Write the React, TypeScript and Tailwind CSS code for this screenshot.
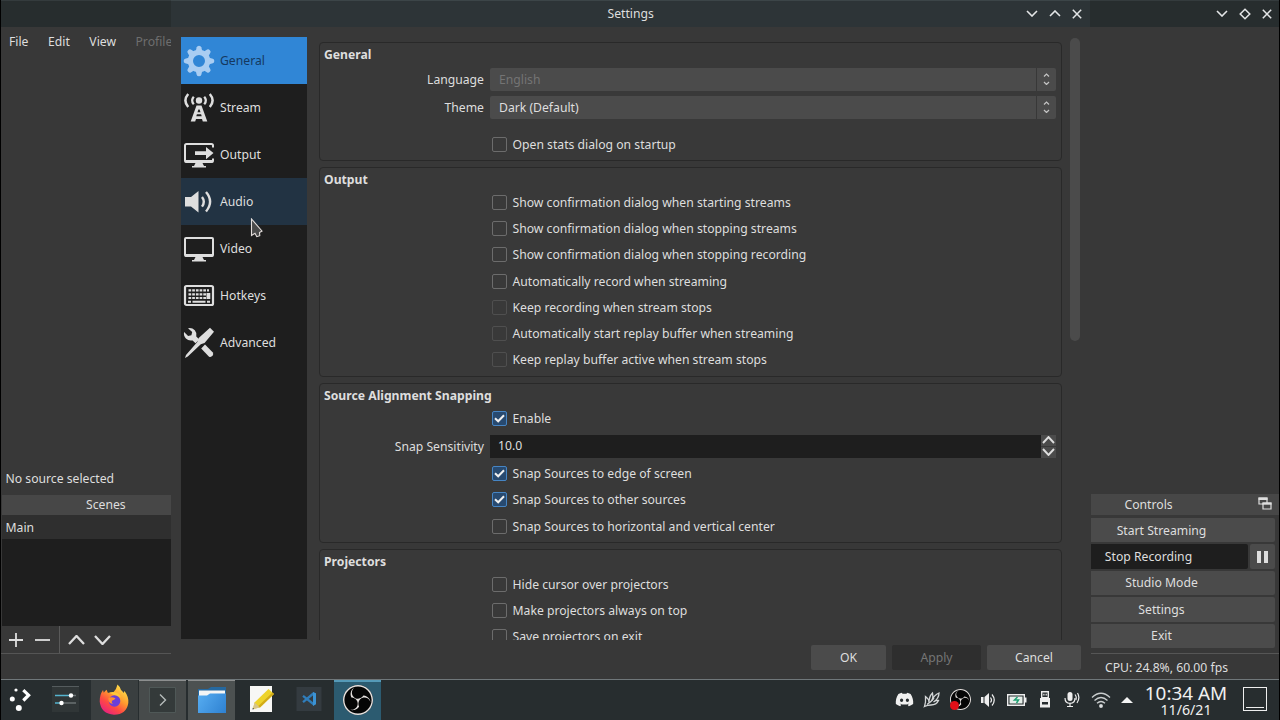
import { ReactNode } from "react";
import clsx from "clsx";
import { FaDiscord } from "react-icons/fa";
import { SiObsstudio } from "react-icons/si";

const GearIcon = () => (
  <svg width="32" height="32" viewBox="0 0 32 32" fill="none">
    <circle cx="16" cy="16" r="8.6" stroke="#a9cdf2" strokeWidth="5.2" />
    {[0, 45, 90, 135, 180, 225, 270, 315].map((angle) => (
      <path
        key={angle}
        d="M12.6 6.500 13.700 2.200q.4-1.500 2.300-1.500t2.300 1.500l1.100 4.300z"
        fill="#a9cdf2"
        transform={`rotate(${angle} 16 16)`}
      />
    ))}
  </svg>
);

const StreamIcon = () => (
  <svg width="32" height="32" viewBox="0 0 32 32" fill="none" stroke="#dedede">
    <circle cx="16" cy="8.500" r="3.200" fill="#dedede" stroke="none" />
    <path d="M10.800 4.800q-3.400 3.700 0 7.400M21.200 4.800q3.400 3.700 0 7.400" strokeWidth="2.300" />
    <path d="M5.200 2q-5.600 6.500 0 13M26.800 2q5.600 6.500 0 13" strokeWidth="2.500" />
    <path
      d="M13.500 13.500h5L24.300 29.500h-4.500L19 27h-6l-.8 2.500H7.700zM15.400 17.500l-.9 2.700h3l-.9-2.700zM13.900 22.300l-.6 2h5.400l-.6-2z"
      fill="#dedede"
      fillRule="evenodd"
      stroke="none"
    />
  </svg>
);

const OutputIcon = () => (
  <svg width="32" height="32" viewBox="0 0 32 32" fill="none">
    <path
      d="M30 8.500V6.500Q30 5 28.500 5H3.500Q2 5 2 6.500v15Q2 23 3.500 23h25q1.500 0 1.500-1.500V19.500"
      stroke="#dedede"
      strokeWidth="2"
    />
    <path d="M2 21h28v2.500H2zM12.500 24h7l1.500 3h2v1.500H9V27h2z" fill="#dedede" />
    <path d="M12 12.200h11V8l7.500 6.100L23 20.200V16H12z" fill="#dedede" />
  </svg>
);

const AudioIcon = () => (
  <svg width="32" height="32" viewBox="0 0 32 32" fill="none">
    <path d="M2 11h6l7.500-6v21.500L8 20.500H2z" fill="#dedede" />
    <path
      d="M19 11q3.600 4.700 0 9.600M23 6q8.200 9.500 0 19.500"
      stroke="#dedede"
      strokeWidth="2.400"
    />
  </svg>
);

const VideoIcon = () => (
  <svg width="32" height="32" viewBox="0 0 32 32" fill="none">
    <rect x="2" y="5" width="28" height="18" rx="1" stroke="#dedede" strokeWidth="2" />
    <path d="M2 21h28v2.500H2zM12.500 24h7l1.500 3h2v1.500H9V27h2z" fill="#dedede" />
  </svg>
);

const HotkeysIcon = () => (
  <svg width="32" height="32" viewBox="0 0 32 32" fill="none">
    <rect x="2" y="6" width="28" height="19" rx="1.500" stroke="#dedede" strokeWidth="2.200" />
    <path
      d="M5.500 10.300h20.500M5.500 14.300h20.500M5.500 18h20.500"
      stroke="#dedede"
      strokeWidth="2.200"
      strokeDasharray="2.700 1"
    />
    <path d="M5 21.700h3M9.500 21.700h13M24 21.700h3" stroke="#dedede" strokeWidth="1.900" />
    <path d="M23.500 13h3.800v6h-3.800z" fill="#dedede" />
  </svg>
);

const AdvancedIcon = () => (
  <svg width="32" height="32" viewBox="0 0 32 32" fill="#dedede">
    <path d="M5 1.300q4-.8 6.800 2 2.400 2.700 1.500 6.200l3 3-3.800 3.800-2.900-2.900q-4 .9-6.700-1.900Q.300 8.700 1.100 5l4 4 3.300-.8.800-3.200z" />
    <path d="M18.200 21.400 22 17.600l7.600 7.700q1.300 1.500 0 3.500-2 1.900-3.800.6z" />
    <path d="M27 .800 31 4.700 21.500 16l-3.700 1.300L4.800 29.500 2 31l1-3L14.300 15l1.400-4z" />
  </svg>
);

const categories = [
  { label: "General", icon: <GearIcon />, className: "bg-[#3086d6] text-[#15395f]" },
  { label: "Stream", icon: <StreamIcon />, className: "" },
  { label: "Output", icon: <OutputIcon />, className: "" },
  { label: "Audio", icon: <AudioIcon />, className: "bg-[#223343]" },
  { label: "Video", icon: <VideoIcon />, className: "" },
  { label: "Hotkeys", icon: <HotkeysIcon />, className: "" },
  { label: "Advanced", icon: <AdvancedIcon />, className: "" },
];

type ChevronProps = {
  up?: boolean;
  width?: number;
  height?: number;
  stroke?: number;
};

const Chevron = ({ up, width = 12, height = 7, stroke = 1.6 }: ChevronProps) => (
  <svg
    width={width}
    height={height}
    viewBox={`0 0 ${width} ${height}`}
    fill="none"
    stroke="currentColor"
    strokeWidth={stroke}
  >
    <path
      d={
        up
          ? `M1 ${height - 1}L${width / 2} 1L${width - 1} ${height - 1}`
          : `M1 1L${width / 2} ${height - 1}L${width - 1} 1`
      }
    />
  </svg>
);

const CloseIcon = () => (
  <svg width="10" height="10" viewBox="0 0 10 10" stroke="currentColor" strokeWidth="1.500">
    <path d="M.8.8l8.400 8.400M9.200.8.800 9.200" />
  </svg>
);

const Group = ({
  title,
  className,
  children,
}: {
  title: string;
  className: string;
  children: ReactNode;
}) => (
  <fieldset
    className={clsx(
      "w-full shrink-0 rounded-[4px] border border-[#292929] bg-[#393939]",
      className
    )}
  >
    <div className="flex h-[21.500px] items-center pl-1 pt-[1.500px] font-bold">{title}</div>
    {children}
  </fieldset>
);

const Check = ({
  label,
  checked,
  disabled,
}: {
  label: string;
  checked?: boolean;
  disabled?: boolean;
}) => (
  <div className="flex h-[26.200px] items-center pl-[172px]">
    <span
      className={clsx(
        "flex size-[15px] items-center justify-center rounded-[2px] border",
        checked && "border-[#4685c4] bg-[#284a70]",
        !checked && !disabled && "border-[#6c6c6c]",
        disabled && "border-[#4f4f4f]"
      )}
    >
      {checked && (
        <svg width="11" height="9" viewBox="0 0 11 9" fill="none">
          <path d="M1 4.200 4.200 7.300 10 1.200" stroke="#f0f0f0" strokeWidth="2" />
        </svg>
      )}
    </span>
    <span className="ml-[5.500px] pt-px">{label}</span>
  </div>
);

const Combo = ({
  label,
  value,
  disabled,
}: {
  label: string;
  value: string;
  disabled?: boolean;
}) => (
  <div className="flex h-7 items-center">
    <span className="w-[164px] pt-px text-right">{label}</span>
    <div className="ml-[6px] flex h-[23px] w-[566px] rounded-[2px] bg-[#4b4b4b]">
      <span
        className={clsx(
          "flex flex-1 items-center border-r border-[#383838] pl-[9px] pt-px",
          disabled && "text-[#747474]"
        )}
      >
        {value}
      </span>
      <span className="flex w-[19px] flex-col items-center justify-center gap-[3px] text-[#c4c4c4]">
        <Chevron up width={7} height={4.500} stroke={1.200} />
        <Chevron width={7} height={4.500} stroke={1.200} />
      </span>
    </div>
  </div>
);

const SettingsDialog = () => (
  <div className="flex w-[919px] flex-col bg-[#383838]">
    <div className="flex h-[27px] items-center border-t border-[#3c4548] bg-[#2d3437] pb-px pl-[436.500px] pr-2">
      <span>Settings</span>
      <div className="ml-auto flex items-center gap-[11px] text-[#e4e6e7]">
        <Chevron />
        <Chevron up />
        <CloseIcon />
      </div>
    </div>
    <div className="flex h-[613px] overflow-hidden pl-[10px]">
      <div className="mt-[10px] h-[602px] w-[126px] bg-[#1e1e1e]">
        {categories.map(({ label, icon, className }) => (
          <div
            key={label}
            className={clsx("flex h-[46.900px] items-center pl-[2px] pt-[2px]", className)}
          >
            {icon}
            <span className="ml-[5px]">{label}</span>
          </div>
        ))}
      </div>
      <div className="ml-3 mt-[15px] flex w-[743px] flex-col gap-[6px] overflow-hidden">
        <Group title="General" className="h-[119px]">
          <div className="pt-[0.500px]">
            <Combo label="Language" value="English" disabled />
            <Combo label="Theme" value="Dark (Default)" />
          </div>
          <div className="mt-[10px]">
            <Check label="Open stats dialog on startup" />
          </div>
        </Group>
        <Group title="Output" className="h-[210px]">
          <Check label="Show confirmation dialog when starting streams" />
          <Check label="Show confirmation dialog when stopping streams" />
          <Check label="Show confirmation dialog when stopping recording" />
          <Check label="Automatically record when streaming" />
          <Check label="Keep recording when stream stops" disabled />
          <Check label="Automatically start replay buffer when streaming" disabled />
          <Check label="Keep replay buffer active when stream stops" disabled />
        </Group>
        <Group title="Source Alignment Snapping" className="h-[160px]">
          <Check label="Enable" checked />
          <div className="flex h-[29px] items-center">
            <span className="w-[164px] pt-px text-right">Snap Sensitivity</span>
            <div className="ml-[6px] flex h-[23px] w-[566px]">
              <span className="flex flex-1 items-center bg-[#1e1e1e] pl-2">10.0</span>
              <div className="flex w-[15px] flex-col gap-px text-[#dedede]">
                <span className="flex flex-1 items-center justify-center bg-[#4b4b4b]">
                  <Chevron up width={13} height={8} stroke={1.900} />
                </span>
                <span className="flex flex-1 items-center justify-center bg-[#4b4b4b]">
                  <Chevron width={13} height={8} stroke={1.900} />
                </span>
              </div>
            </div>
          </div>
          <Check label="Snap Sources to edge of screen" checked />
          <Check label="Snap Sources to other sources" checked />
          <Check label="Snap Sources to horizontal and vertical center" />
        </Group>
        <Group title="Projectors" className="h-[160px]">
          <Check label="Hide cursor over projectors" />
          <Check label="Make projectors always on top" />
          <Check label="Save projectors on exit" />
        </Group>
      </div>
      <div className="ml-2 mt-[11px] h-[303px] w-[10px] rounded-full bg-[#4b4b4b]" />
    </div>
    <div className="flex justify-end gap-[6px] pr-[9px] pt-[5px]">
      <button className="h-[25px] w-[75px] rounded-[2px] bg-[#4b4b4b]">OK</button>
      <button className="h-[25px] w-[89px] rounded-[2px] bg-[#2e2e2e] text-[#757575]">
        Apply
      </button>
      <button className="h-[25px] w-[94px] rounded-[2px] bg-[#4b4b4b]">Cancel</button>
    </div>
  </div>
);

const ScenesColumn = () => (
  <div className="flex w-[170px] flex-col">
    <div className="h-[27px] shrink-0 border-t border-[#343b3d] bg-[#272d2e]" />
    <div className="flex h-[30px] shrink-0 items-center gap-[19.500px] pl-2">
      <span>File</span>
      <span>Edit</span>
      <span>View</span>
      <span className="text-[#6e6e6e]">Profile</span>
    </div>
    <div className="mt-auto pb-[7.500px] pl-[4.500px]">No source selected</div>
    <div className="ml-px flex h-[20px] shrink-0 items-center bg-[#474747] pl-[84px]">
      Scenes
    </div>
    <div className="ml-px h-[111px] shrink-0 bg-[#1e1e1e]">
      <div className="flex h-[24px] items-center bg-[#2f2f2f] pl-[3.500px] pt-px">Main</div>
    </div>
    <div className="ml-px flex h-[27px] shrink-0 items-center text-[#dedede]">
      <svg width="14" height="14" viewBox="0 0 14 14" className="ml-[7px]">
        <path d="M7 0v14M0 7h14" stroke="currentColor" strokeWidth="1.800" />
      </svg>
      <svg width="15" height="14" viewBox="0 0 15 14" className="ml-3">
        <path d="M0 7h15" stroke="currentColor" strokeWidth="1.800" />
      </svg>
      <span className="ml-[9px] h-full w-px bg-[#5a5a5a]" />
      <span className="ml-2">
        <Chevron up width={17} height={10} stroke={2.300} />
      </span>
      <span className="ml-[9px]">
        <Chevron width={17} height={10} stroke={2.300} />
      </span>
    </div>
    <div className="h-[26px] shrink-0 border-t border-[#555555]" />
  </div>
);

const ControlButton = ({ label }: { label: string }) => (
  <button className="flex h-[24.300px] w-[184px] items-center justify-center rounded-r-[2px] bg-[#4b4b4b] pr-[43px] pt-px">
    {label}
  </button>
);

const ControlsColumn = () => (
  <div className="flex w-[189px] flex-col">
    <div className="flex h-[27px] items-center justify-end gap-[11px] border-t border-[#343b3d] bg-[#272d2e] pb-px pr-[7px] text-[#e4e6e7]">
      <Chevron />
      <svg width="12" height="12" viewBox="0 0 12 12" fill="none">
        <path d="M6 1.200 10.800 6 6 10.800 1.200 6z" stroke="currentColor" strokeWidth="1.500" />
      </svg>
      <CloseIcon />
    </div>
    <div className="ml-px mt-auto flex h-[21px] items-center bg-[#474747] pl-[33.500px] pr-[7px]">
      Controls
      <svg width="14" height="13" viewBox="0 0 14 13" fill="none" className="mb-[2px] ml-auto">
        <path d="M1 1h8v6H1z" stroke="#dedede" strokeWidth="1.200" />
        <path d="M.5.500h9V3h-9z" fill="#dedede" />
        <path d="M5 6h8v6H5z" fill="#474747" stroke="#dedede" strokeWidth="1.200" />
        <path d="M4.500 5.500h9v2.200h-9z" fill="#dedede" />
      </svg>
    </div>
    <div className="mt-[3px] flex h-[130px] flex-col justify-between pl-px">
      <ControlButton label="Start Streaming" />
      <div className="flex gap-[2px]">
        <button className="flex h-[24.300px] w-[157px] items-center justify-center rounded-r-[2px] bg-[#1e1e1e] pr-[42px] pt-px">
          Stop Recording
        </button>
        <button className="flex w-[25px] items-center justify-center gap-[3px] rounded-[2px] bg-[#4b4b4b]">
          <span className="h-3 w-[4px] bg-[#dedede]" />
          <span className="h-3 w-[4px] bg-[#dedede]" />
        </button>
      </div>
      <ControlButton label="Studio Mode" />
      <ControlButton label="Settings" />
      <ControlButton label="Exit" />
    </div>
    <div className="ml-px mt-[5px] flex h-[26px] items-center border-t border-[#565656] pl-[14px] pt-[3px]">
      CPU: 24.8%, 60.00 fps
    </div>
  </div>
);

const LauncherIcon = () => (
  <svg width="24" height="26" viewBox="0 0 24 26" fill="#ffffff">
    <circle cx="7" cy="4" r="1.600" />
    <circle cx="3.300" cy="13" r="2.500" />
    <circle cx="9.800" cy="22" r="3" />
    <path d="m14.300 4.200 5.300 5-5.300 5.300" fill="none" stroke="#ffffff" strokeWidth="3.200" />
  </svg>
);

const SlidersIcon = () => (
  <svg width="27" height="26" viewBox="0 0 27 26" fill="none">
    <path d="M0 0h27v26H0z" fill="#303637" />
    <path d="M0 .5h27" stroke="#555c5e" />
    <path d="M3 9.500h15" stroke="#55b4cf" strokeWidth="1.500" />
    <path d="M20 9.500h4M10 17h14" stroke="#697173" strokeWidth="1.500" />
    <path d="M3 17h6" stroke="#55b4cf" strokeWidth="1.500" />
    <circle cx="19" cy="9.500" r="2.200" fill="#ffffff" />
    <circle cx="9.500" cy="17" r="2.200" fill="#ffffff" />
  </svg>
);

const FirefoxIcon = () => (
  <svg width="30" height="31" viewBox="0 0 30 31" fill="none">
    <defs>
      <linearGradient id="fox" x1="24" y1="3" x2="6" y2="28" gradientUnits="userSpaceOnUse">
        <stop stopColor="#ffe04a" />
        <stop offset=".4" stopColor="#ff9a2e" />
        <stop offset=".7" stopColor="#ff4a42" />
        <stop offset="1" stopColor="#e9247c" />
      </linearGradient>
    </defs>
    <path
      d="M18.500.500q2.500 2 3.500 5.500 1.500 1 2.500 3l1-2q4.500 6 3.800 12Q27.500 30.500 15 30.700 2 30 .7 17.500.500 11 4 6l.8 2.800Q6 6.500 7.600 5.700l1.200 3 5 .300Q17.800 5 18.500.500z"
      fill="url(#fox)"
    />
    <path d="M10 8.500q9-2 12 5-3-2-5-1.500-4-2-7-3.500z" fill="#ffc838" />
    <circle cx="15.500" cy="17" r="5.800" fill="#6a3fd8" />
    <path d="M9.500 14q3-1.500 7 .200-1 1.800-3.500 2.500-1 2.200 1 3-3.500 0-4.500-3z" fill="#ff8e31" />
  </svg>
);

const TerminalIcon = () => (
  <svg width="27" height="26" viewBox="0 0 27 26" fill="none">
    <path d="M.5.500h26v25H.500z" fill="#343a3a" stroke="#4f5857" />
    <path d="m11 7.500 5.500 5.500-5.500 5.500" stroke="#b5bbba" strokeWidth="1.400" />
  </svg>
);

const FolderIcon = () => (
  <svg width="30" height="28" viewBox="0 0 30 28">
    <defs>
      <linearGradient id="folder" x1="0" y1="8" x2="30" y2="28" gradientUnits="userSpaceOnUse">
        <stop stopColor="#58aef2" />
        <stop offset="1" stopColor="#2c7fd0" />
      </linearGradient>
    </defs>
    <path d="M1 3h10l3-2h15v12H1z" fill="#25689f" />
    <path d="M2 4.500h26V13H2z" fill="#f4f5f5" />
    <path d="M1 9.500h9l3-2h16V27H1z" fill="url(#folder)" />
  </svg>
);

const NotesIcon = () => (
  <svg width="26" height="28" viewBox="0 0 26 28">
    <path d="M1 1h22v26H1z" fill="#f7f7f5" />
    <path d="M5.500 17.500 19.500 4 25 9 11 22.500 4 24z" fill="#edd32b" />
    <path d="M5.500 17.500 4 24l7-1.500z" fill="#d7c58c" />
    <path d="M23.500 7.600 25 9 11 22.500l-1.700-1.500z" fill="#d2ab16" />
    <path d="m3.800 22.800-.3 1.800 1.700-.6z" fill="#333333" />
  </svg>
);

const CodeIcon = () => (
  <svg width="26" height="26" viewBox="0 0 26 26" fill="none">
    <path d="M.500 1h25v24H.500z" fill="#343b40" />
    <path d="M7 9.800 18 18.500M7 16.200 18 7" stroke="#2f7dbb" strokeWidth="2.300" />
    <path d="M17 6l3 1.300v11L17 20z" fill="#3b93d4" />
  </svg>
);

const ObsIcon = ({ size }: { size: number }) => (
  <span className="flex rounded-full bg-[#050505]">
    <SiObsstudio size={size} color="#e6e2e0" />
  </span>
);

const TaskButton = ({ className, children }: { className: string; children: ReactNode }) => (
  <div className={clsx("flex items-center justify-center pb-[2px]", className)}>{children}</div>
);

const TrayIcon = ({ className, children }: { className?: string; children: ReactNode }) => (
  <span className={clsx("flex w-[28.100px] items-center justify-center pb-px", className)}>
    {children}
  </span>
);

const Taskbar = () => (
  <div className="flex h-[41px] items-stretch border-t border-[#70777a] bg-[#272d2f] text-[#f0f0f0]">
    <TaskButton className="w-[39px]">
      <LauncherIcon />
    </TaskButton>
    <TaskButton className="w-[51px] pr-[1px]">
      <SlidersIcon />
    </TaskButton>
    <TaskButton className="w-[47px] bg-[#3a3f40] pr-[1px]">
      <FirefoxIcon />
    </TaskButton>
    <TaskButton className="ml-px w-[47px] border-t border-[#8d8f8f] bg-[#474b4b]">
      <TerminalIcon />
    </TaskButton>
    <TaskButton className="ml-[2px] w-[47px] border-t border-[#8d8f8f] bg-[#4c5151]">
      <FolderIcon />
    </TaskButton>
    <TaskButton className="ml-[2px] w-[49px]">
      <NotesIcon />
    </TaskButton>
    <TaskButton className="w-[48px] pr-[2px]">
      <CodeIcon />
    </TaskButton>
    <TaskButton className="w-[47px] border-t-2 border-[#559ab8] bg-[#2c5b70]">
      <ObsIcon size={30} />
    </TaskButton>

    <div className="ml-auto flex">
      <TrayIcon>
        <FaDiscord size={19} />
      </TrayIcon>
      <TrayIcon>
        <svg width="18" height="17" viewBox="0 0 18 17" fill="none" stroke="#d3d6d7" strokeWidth="1.300">
          <path d="M1.500 15.500Q3 11.500 2.500 5.500 6 8 6 11.500 6 5.500 9.500 2q1 3.500-.500 7.500Q11 4 16 2q0 5.500-5.500 9 3-2 5-1.500-2 4.500-7.500 4.500-3.500 0-6.500 1.500z" />
          <path d="M4 13.500q4-2.500 7-6.500" />
        </svg>
      </TrayIcon>
      <TrayIcon className="relative">
        <ObsIcon size={21} />
        <span className="absolute bottom-[10px] left-[4px] size-[9px] rounded-full bg-[#e01018]" />
      </TrayIcon>
      <TrayIcon>
        <svg width="17" height="16" viewBox="0 0 17 16" fill="none" stroke="#eeeeee">
          <path d="M1 5h2.500v6H1zM4.500 5l4.500-4v14l-4.500-4z" fill="#eeeeee" stroke="none" />
          <path d="M10.500 5.500q2 2.500 0 5" strokeWidth="1.200" />
          <path d="M12 2.500q4.500 5.500 0 11" strokeWidth="1.200" />
        </svg>
      </TrayIcon>
      <TrayIcon>
        <svg width="20" height="12" viewBox="0 0 20 12" fill="none">
          <path d="M.700.700h16.600v10.600H.700z" stroke="#eeeeee" strokeWidth="1.400" />
          <path d="M18 3.500h1.500v5H18z" fill="#eeeeee" />
          <path d="M2.500 2.500h13v7h-13z" fill="#e6eeea" />
          <path d="M10.500 3 7.500 6h4L9.500 9" stroke="#1fa072" strokeWidth="1.500" />
        </svg>
      </TrayIcon>
      <TrayIcon>
        <svg width="10" height="17" viewBox="0 0 10 17" fill="none">
          <path d="M1.700.700h6.600v6H1.700z" stroke="#eeeeee" strokeWidth="1.400" />
          <path d="M3.300 2.700h1.200v1.800H3.300zM5.600 2.700h1.200v1.800H5.600z" fill="#eeeeee" />
          <path d="M0 7h10v9.500H0z" fill="#eeeeee" />
          <path d="M2 11h6v2.500H2z" fill="#272d2f" />
        </svg>
      </TrayIcon>
      <TrayIcon>
        <svg width="17" height="17" viewBox="0 0 17 17" fill="none" stroke="#eeeeee">
          <rect x="3.500" y="1" width="5" height="9" rx="2.500" fill="#eeeeee" stroke="none" />
          <path d="M1 7q0 5.300 5 5.300T11 7M6 12v3.500M3 15.500h6" strokeWidth="1.200" />
          <path d="M11 3.500q2 2.500.800 5.500M13.500 2q3 5-.500 10" strokeWidth="1.200" />
        </svg>
      </TrayIcon>
      <TrayIcon>
        <svg width="20" height="16" viewBox="0 0 20 16" fill="none" stroke="#c9cdce" strokeWidth="1.300">
          <path d="M1 5.500Q10-3 19 5.500M3.500 8.500q6.500-6 13 0M6 11.300q4-3.600 8 0" />
          <circle cx="10" cy="14" r="1.300" fill="#ffffff" />
        </svg>
      </TrayIcon>
      <span className="flex w-6 items-center justify-center pb-px">
        <svg width="12" height="6" viewBox="0 0 12 6">
          <path d="M0 6 6 0l6 6z" fill="#f4f4f4" />
        </svg>
      </span>
      <div className="flex w-[95px] flex-col items-center pr-px pt-[3px]">
        <span className="text-[18.900px] leading-[20px]">10:34 AM</span>
        <span className="text-[14.200px] leading-[14px]">11/6/21</span>
      </div>
      <div className="ml-[9px] mr-[12px] mt-[7px] flex h-[24px] w-[24px] items-end border-[1.500px] border-[#eeeeee] p-[2px]">
        <span className="h-px w-full bg-[#eeeeee]" />
      </div>
    </div>
  </div>
);

export default function App() {
  return (
    <div className="relative flex h-[720px] w-[1280px] flex-col overflow-hidden border-x border-black bg-[#383838] font-['Noto_Sans',sans-serif] text-[12.190px] leading-[18px] text-[#dedede]">
      <div className="flex h-[679px]">
        <ScenesColumn />
        <SettingsDialog />
        <ControlsColumn />
      </div>
      <Taskbar />
      <svg
        width="13"
        height="20"
        viewBox="0 0 13 20"
        className="absolute left-[249px] top-[218px]"
      >
        <path
          d="M1.500 1v16.500l3.500-2.200 1.800 3.400 3-1-.3-3.200 2.500-1.500z"
          fill="#4a4a4a"
          stroke="#e4dedc"
          strokeWidth="1.100"
        />
      </svg>
    </div>
  );
}
